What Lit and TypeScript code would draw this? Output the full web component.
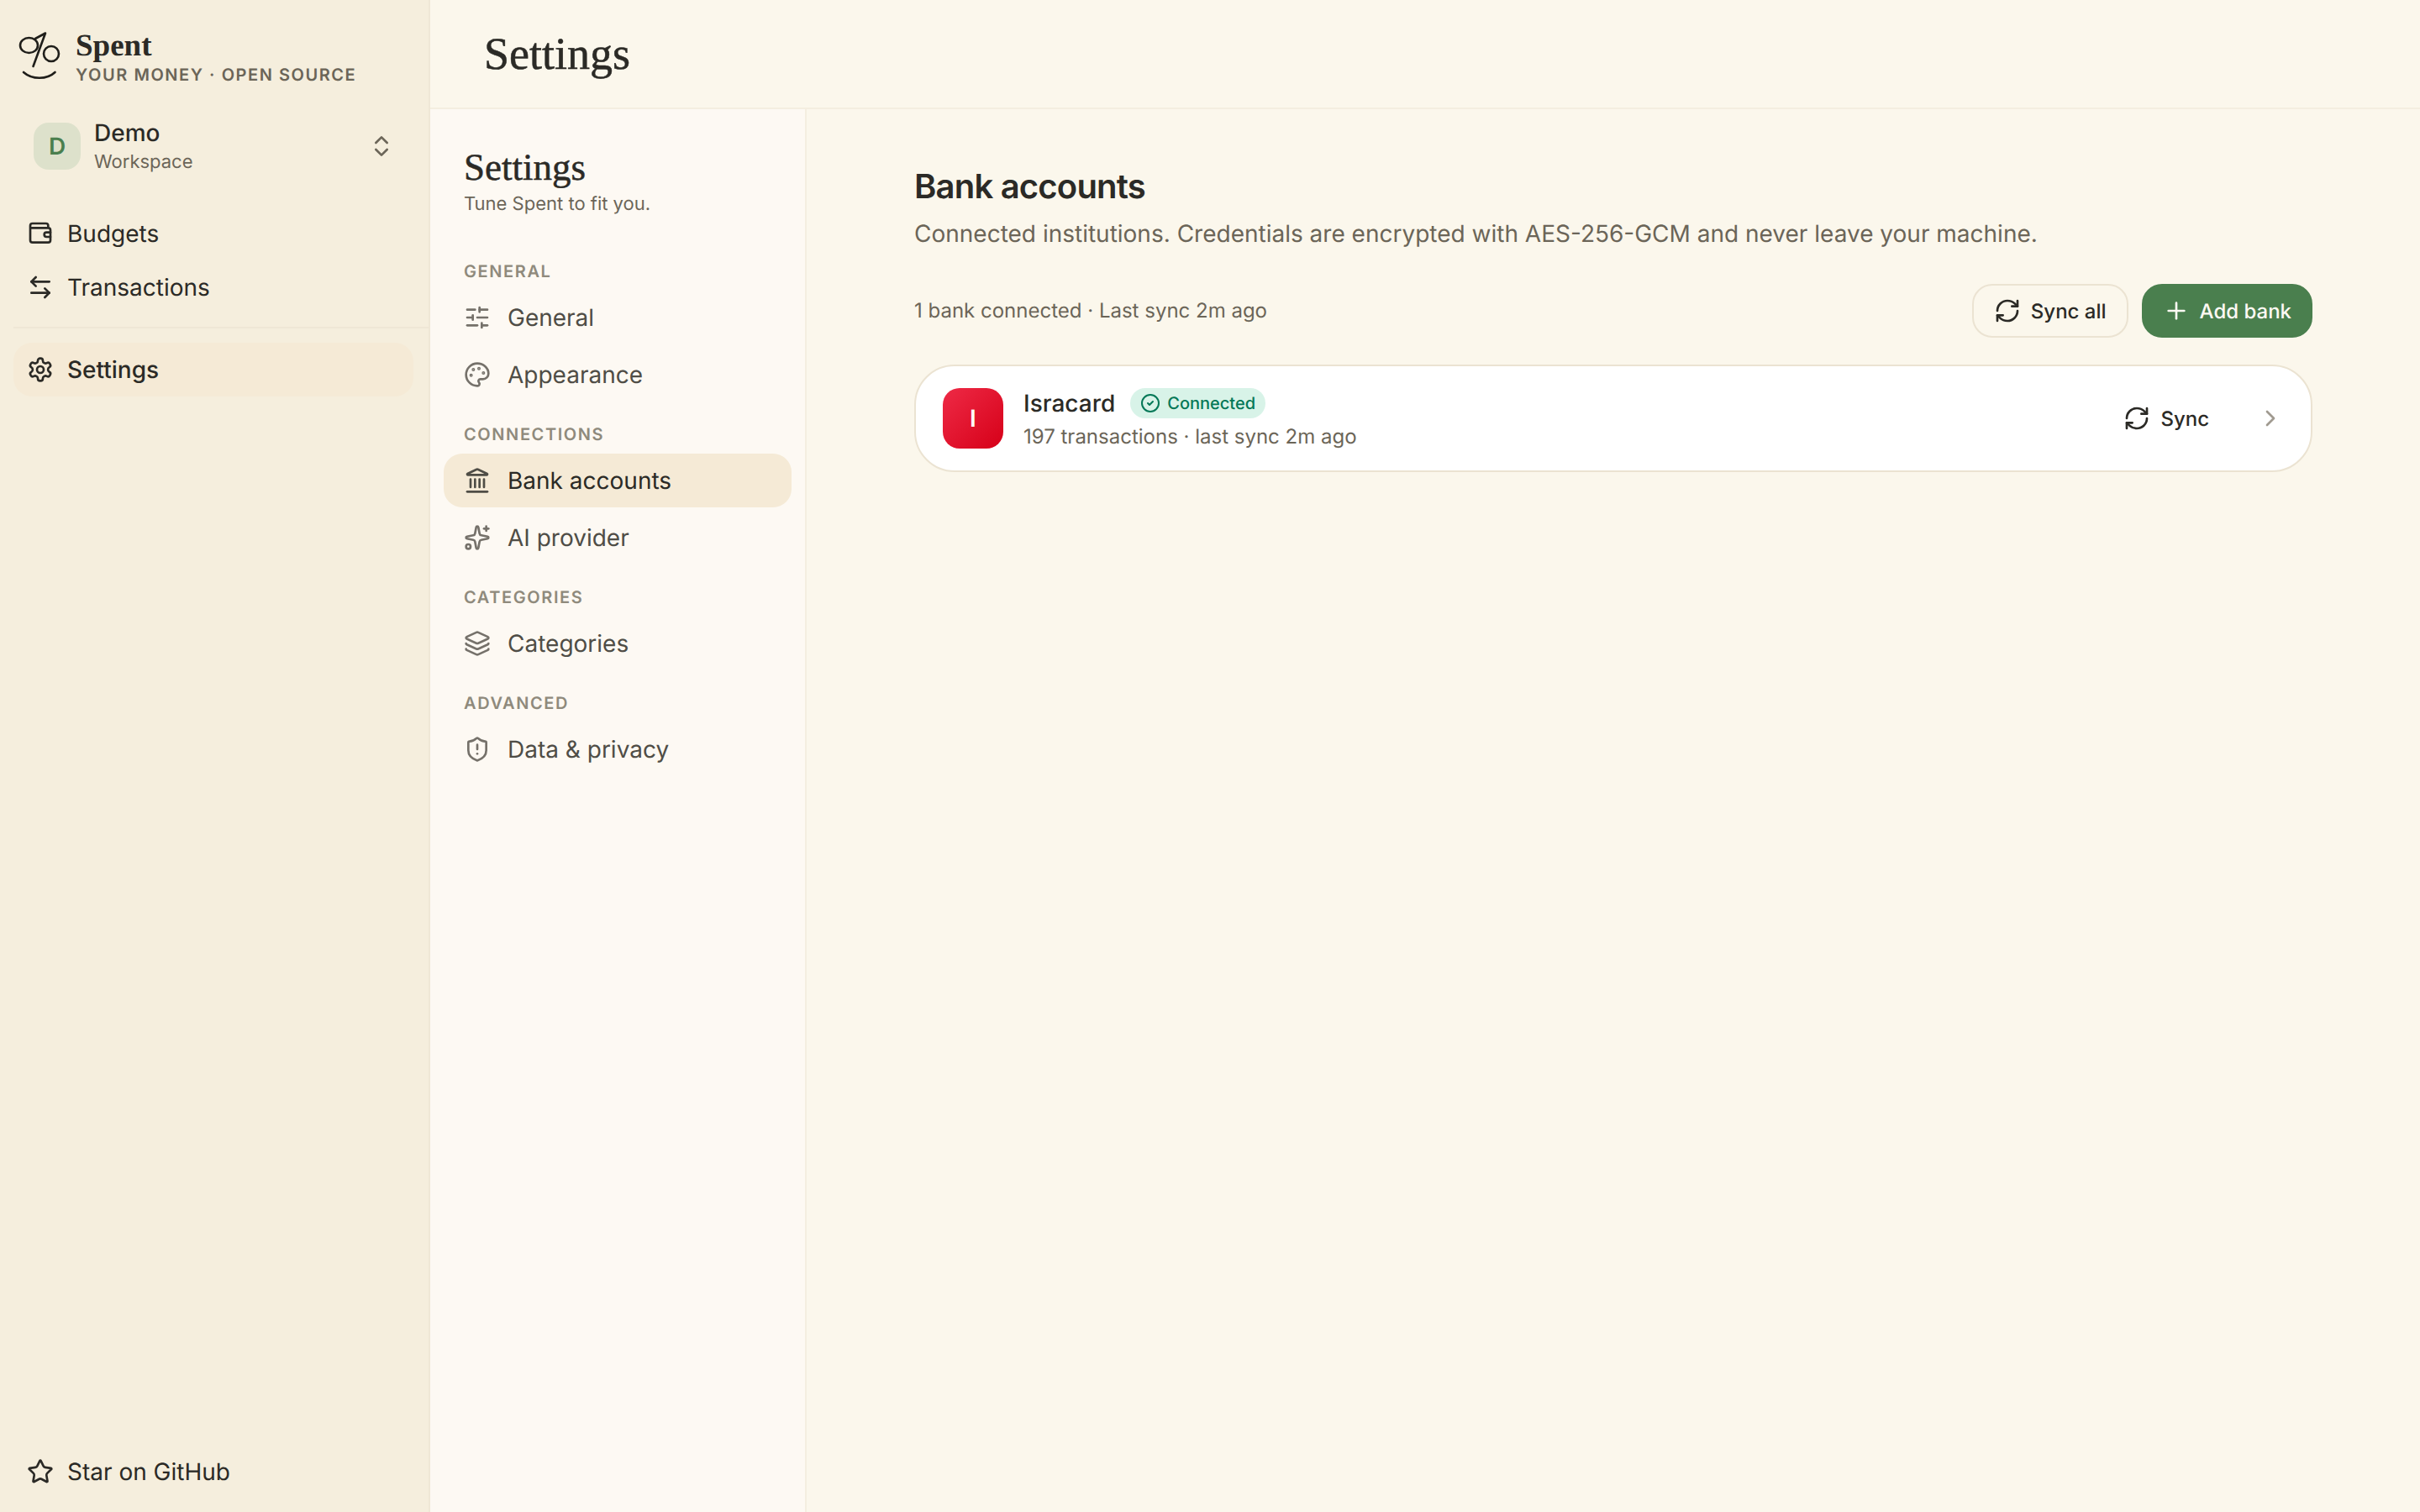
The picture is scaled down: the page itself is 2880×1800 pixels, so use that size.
import { LitElement, html, css, svg } from "lit";
import { customElement } from "lit/decorators.js";

const icons: Record<string, unknown> = {
  wallet: svg`<path d="M4 7h15a2 2 0 0 1 2 2v9a2 2 0 0 1-2 2H5a2 2 0 0 1-2-2V5a2 2 0 0 1 2-2h12a2 2 0 0 1 2 2v2"/><path d="M21 11h-3.5a2 2 0 0 0 0 4H21"/>`,
  arrows: svg`<path d="M8 3 4 7l4 4"/><path d="M4 7h16"/><path d="m16 21 4-4-4-4"/><path d="M20 17H4"/>`,
  gear: svg`<path d="M12.22 2h-.44a2 2 0 0 0-2 2v.18a2 2 0 0 1-1 1.73l-.43.25a2 2 0 0 1-2 0l-.15-.08a2 2 0 0 0-2.73.73l-.22.38a2 2 0 0 0 .73 2.73l.15.1a2 2 0 0 1 1 1.72v.51a2 2 0 0 1-1 1.74l-.15.09a2 2 0 0 0-.73 2.73l.22.38a2 2 0 0 0 2.73.73l.15-.08a2 2 0 0 1 2 0l.43.25a2 2 0 0 1 1 1.73V20a2 2 0 0 0 2 2h.44a2 2 0 0 0 2-2v-.18a2 2 0 0 1 1-1.73l.43-.25a2 2 0 0 1 2 0l.15.08a2 2 0 0 0 2.73-.73l.22-.39a2 2 0 0 0-.73-2.73l-.15-.08a2 2 0 0 1-1-1.74v-.5a2 2 0 0 1 1-1.74l.15-.09a2 2 0 0 0 .73-2.73l-.22-.38a2 2 0 0 0-2.73-.73l-.15.08a2 2 0 0 1-2 0l-.43-.25a2 2 0 0 1-1-1.73V4a2 2 0 0 0-2-2z"/><circle cx="12" cy="12" r="3"/>`,
  star: svg`<path d="M11.525 2.295a.53.53 0 0 1 .95 0l2.31 4.679a2.123 2.123 0 0 0 1.595 1.16l5.166.756a.53.53 0 0 1 .294.904l-3.736 3.638a2.123 2.123 0 0 0-.611 1.878l.882 5.14a.53.53 0 0 1-.771.56l-4.618-2.428a2.122 2.122 0 0 0-1.973 0L6.396 21.01a.53.53 0 0 1-.77-.56l.881-5.139a2.122 2.122 0 0 0-.611-1.879L2.16 9.795a.53.53 0 0 1 .294-.906l5.165-.755a2.122 2.122 0 0 0 1.597-1.16z"/>`,
  updown: svg`<path d="m7 15 5 5 5-5"/><path d="m7 9 5-5 5 5"/>`,
  sliders: svg`<path d="M10 5H3"/><path d="M12 19H3"/><path d="M14 3v4"/><path d="M16 17v4"/><path d="M21 12h-9"/><path d="M21 19h-5"/><path d="M21 5h-7"/><path d="M8 10v4"/><path d="M8 12H3"/>`,
  palette: svg`<path d="M12 22a1 1 0 0 1 0-20 10 9 0 0 1 10 9 5 5 0 0 1-5 5h-2.25a1.75 1.75 0 0 0-1.4 2.8l.3.4a1.75 1.75 0 0 1-1.4 2.8z"/><circle cx="13.5" cy="6.5" r=".5" fill="currentColor"/><circle cx="17.5" cy="10.5" r=".5" fill="currentColor"/><circle cx="6.5" cy="12.5" r=".5" fill="currentColor"/><circle cx="8.5" cy="7.5" r=".5" fill="currentColor"/>`,
  landmark: svg`<path d="M10 18v-7"/><path d="M11.12 2.198a2 2 0 0 1 1.76.006l7.866 3.847c.476.233.31.949-.22.949H3.474c-.53 0-.695-.716-.22-.949z"/><path d="M14 18v-7"/><path d="M18 18v-7"/><path d="M3 22h18"/><path d="M6 18v-7"/>`,
  sparkles: svg`<path d="M11.017 2.814a1 1 0 0 1 1.966 0l1.051 5.558a2 2 0 0 0 1.594 1.594l5.558 1.051a1 1 0 0 1 0 1.966l-5.558 1.051a2 2 0 0 0-1.594 1.594l-1.051 5.558a1 1 0 0 1-1.966 0l-1.051-5.558a2 2 0 0 0-1.594-1.594l-5.558-1.051a1 1 0 0 1 0-1.966l5.558-1.051a2 2 0 0 0 1.594-1.594z"/><path d="M20 2v4"/><path d="M22 4h-4"/><circle cx="4" cy="20" r="2"/>`,
  layers: svg`<path d="M12.83 2.18a2 2 0 0 0-1.66 0L2.6 6.08a1 1 0 0 0 0 1.83l8.58 3.91a2 2 0 0 0 1.66 0l8.58-3.9a1 1 0 0 0 0-1.83z"/><path d="M2 12a1 1 0 0 0 .58.91l8.6 3.91a2 2 0 0 0 1.65 0l8.58-3.9A1 1 0 0 0 22 12"/><path d="M2 17a1 1 0 0 0 .58.91l8.6 3.91a2 2 0 0 0 1.65 0l8.58-3.9A1 1 0 0 0 22 17"/>`,
  shield: svg`<path d="M20 13c0 5-3.5 7.5-7.66 8.95a1 1 0 0 1-.67-.01C7.5 20.5 4 18 4 13V6a1 1 0 0 1 1-1c2 0 4.5-1.2 6.24-2.72a1.17 1.17 0 0 1 1.52 0C14.51 3.81 17 5 19 5a1 1 0 0 1 1 1z"/><path d="M12 8v4"/><path d="M12 16h.01"/>`,
  refresh: svg`<path d="M3 12a9 9 0 0 1 9-9 9.75 9.75 0 0 1 6.74 2.74L21 8"/><path d="M21 3v5h-5"/><path d="M21 12a9 9 0 0 1-9 9 9.75 9.75 0 0 1-6.74-2.74L3 16"/><path d="M8 16H3v5"/>`,
  plus: svg`<path d="M5 12h14"/><path d="M12 5v14"/>`,
  chevron: svg`<path d="m9 18 6-6-6-6"/>`,
  check: svg`<circle cx="12" cy="12" r="10"/><path d="m9 12 2 2 4-4"/>`,
};

const icon = (name: string) => html`<svg class="icon" viewBox="0 0 24 24" fill="none" stroke="currentColor" stroke-width="2" stroke-linecap="round" stroke-linejoin="round">${icons[name]}</svg>`;

const groups = [
  { label: "GENERAL", items: [["sliders", "General"], ["palette", "Appearance"]] },
  { label: "CONNECTIONS", items: [["landmark", "Bank accounts"], ["sparkles", "AI provider"]] },
  { label: "CATEGORIES", items: [["layers", "Categories"]] },
  { label: "ADVANCED", items: [["shield", "Data & privacy"]] },
];

@customElement("app-root")
export class AppRoot extends LitElement {
  static styles = css`
    :host { display: flex; width: 2880px; height: 1800px; overflow: hidden; font-family: Inter, "Liberation Sans", sans-serif; font-optical-sizing: none; text-rendering: geometricPrecision; color: #2b2a26; background: #fbf7ec; }
    * { box-sizing: border-box; }
    .icon { width: 32px; height: 32px; flex: none; display: block; }

    .side { width: 512px; flex: none; display: flex; flex-direction: column; background: #f5eedd; border-right: 2px solid #efe7d6; }
    .brand { display: flex; gap: 18px; padding: 36px 0 0 22px; height: 96px; }
    .logo { width: 50px; height: 60px; flex: none; }
    .brand-text { display: flex; flex-direction: column; }
    .brand-name { font-family: "Liberation Serif", serif; font-weight: 700; font-size: 37px; line-height: 38px; color: #2b2a26; }
    .brand-tag { font-size: 20px; line-height: 24px; font-weight: 600; letter-spacing: 1.55px; color: #6b6558; margin-top: 3px; white-space: nowrap; }
    .ws { display: flex; align-items: center; gap: 16px; padding: 0 40px; margin-top: 50px; height: 56px; }
    .avatar { width: 56px; height: 56px; flex: none; border-radius: 18px; background: #dde1cb; color: #4a7f4e; font-size: 28px; font-weight: 600; display: flex; align-items: center; justify-content: center; }
    .ws-text { flex: 1; display: flex; flex-direction: column; padding-top: 2px; }
    .ws-name { font-size: 28px; line-height: 34px; font-weight: 500; color: #2b2a26; }
    .ws-sub { font-size: 22px; line-height: 32px; margin-top: 2px; color: #6b6558; }
    .updown { color: #6b6558; }
    .nav { display: flex; flex-direction: column; margin-top: 44px; }
    .nav-item { display: flex; align-items: center; gap: 16px; height: 64px; padding: 0 16px; margin: 0 16px; border-radius: 22px; font-size: 28px; color: #2b2a26; }
    .sep { height: 2px; background: #efe7d6; margin: 15px 0 17px 16px; }
    .nav-item.on { background: #f5ead6; font-weight: 500; margin-right: 18px; }
    .spacer { flex: 1; }
    .foot { margin-bottom: 16px; }

    .right { flex: 1; display: flex; flex-direction: column; min-width: 0; }
    .top { height: 130px; flex: none; display: flex; align-items: center; padding-left: 64px; border-bottom: 2px solid #f4eee0; }
    .top-title { font-family: "Liberation Serif", serif; font-size: 54px; font-weight: 400; -webkit-text-stroke: 0.5px #2b2a26; color: #2b2a26; }
    .body { flex: 1; display: flex; min-height: 0; }

    .panel { width: 448px; flex: none; background: #fdf9f3; border-right: 2px solid #f4eee0; padding: 44px 16px 0; display: flex; flex-direction: column; }
    .panel-title { font-family: "Liberation Serif", serif; font-size: 45px; line-height: 50px; padding-left: 24px; -webkit-text-stroke: 0.5px #2b2a26; color: #2b2a26; }
    .panel-sub { font-size: 22px; line-height: 32px; color: #6b6558; padding-left: 24px; margin-top: 3px; }
    .groups { display: flex; flex-direction: column; gap: 27px; margin-top: 52px; }
    .group { display: flex; flex-direction: column; gap: 4px; }
    .group-label { font-size: 20px; line-height: 24px; font-weight: 600; letter-spacing: 1.6px; color: #8f8a7c; padding-left: 24px; margin-bottom: 7px; }
    .item { display: flex; align-items: center; gap: 20px; height: 64px; padding: 0 24px; border-radius: 22px; font-size: 28px; color: #4f4d46; }
    .item .icon { color: #75716a; }
    .item.on { background: #f5ead6; color: #2b2a26; }
    .item.on .icon { color: #4f4d46; }

    .content { flex: 1; padding: 64px 128px 0; min-width: 0; }
    h1 { margin: 0; font-size: 40px; line-height: 56px; font-weight: 600; letter-spacing: -0.8px; color: #2b2a26; }
    .desc { margin-top: 6px; font-size: 28px; line-height: 44px; color: #6b6558; }
    .bar { display: flex; align-items: center; justify-content: space-between; margin-top: 38px; height: 64px; }
    .bar-text { font-size: 24px; color: #6b6558; padding-bottom: 2px; }
    .actions { display: flex; gap: 16px; }
    .btn { display: flex; align-items: center; gap: 12px; height: 64px; padding: 0 24px; border-radius: 24px; font-size: 24px; font-weight: 500; border: 2px solid #ebe3d2; color: #2b2a26; }
    .btn.primary { background: #4a7f4e; border-color: #4a7f4e; color: #fdf9f3; padding: 0 23px; }
    .card { display: flex; align-items: center; margin-top: 32px; height: 128px; background: #fff; border: 2px solid #ebe3d2; border-radius: 48px; padding: 0 32px; }
    .bank { width: 72px; height: 72px; flex: none; border-radius: 20px; background: linear-gradient(135deg, #ee2a46, #d60018); color: #fff; font-size: 28px; font-weight: 600; display: flex; align-items: center; justify-content: center; }
    .info { flex: 1; margin-left: 24px; padding-top: 3px; display: flex; flex-direction: column; gap: 5px; }
    .row { display: flex; align-items: center; gap: 18px; height: 36px; }
    .name { font-size: 28px; font-weight: 500; color: #2b2a26; }
    .badge { display: flex; align-items: center; gap: 8px; height: 36px; padding: 0 12px; border-radius: 18px; background: #d8f3e8; color: #047857; font-size: 20px; font-weight: 500; }
    .badge .icon { width: 24px; height: 24px; }
    .meta { font-size: 24px; line-height: 34px; color: #6b6558; }
    .sync { display: flex; align-items: center; gap: 12px; font-size: 24px; font-weight: 500; color: #2b2a26; margin-right: 57px; }
    .chev { color: #a09a90; }
  `;

  render() {
    return html`
      <aside class="side">
        <div class="brand">
          <svg class="logo" viewBox="22 36 50 60" fill="none" stroke="#1f1e1a" stroke-width="2.6" stroke-linecap="round" stroke-linejoin="round">
            <ellipse cx="34.500" cy="54" rx="10.500" ry="9"/><circle cx="61" cy="64" r="9"/>
            <path d="M39.500 79 54 39.500 42 46"/><path d="M28 86c10 9 28 9 37.500 0"/>
          </svg>
          <div class="brand-text">
            <div class="brand-name">Spent</div>
            <div class="brand-tag">YOUR MONEY · OPEN SOURCE</div>
          </div>
        </div>
        <div class="ws">
          <div class="avatar">D</div>
          <div class="ws-text"><div class="ws-name">Demo</div><div class="ws-sub">Workspace</div></div>
          <span class="updown">${icon("updown")}</span>
        </div>
        <nav class="nav">
          <div class="nav-item">${icon("wallet")}Budgets</div>
          <div class="nav-item">${icon("arrows")}Transactions</div>
          <div class="sep"></div>
          <div class="nav-item on">${icon("gear")}Settings</div>
        </nav>
        <div class="spacer"></div>
        <div class="nav-item foot">${icon("star")}Star on GitHub</div>
      </aside>
      <div class="right">
        <header class="top"><div class="top-title">Settings</div></header>
        <div class="body">
          <section class="panel">
            <div class="panel-title">Settings</div>
            <div class="panel-sub">Tune Spent to fit you.</div>
            <div class="groups">
              ${groups.map((g) => html`
                <div class="group">
                  <div class="group-label">${g.label}</div>
                  ${g.items.map(([i, t]) => html`<div class="item ${t === "Bank accounts" ? "on" : ""}">${icon(i)}${t}</div>`)}
                </div>`)}
            </div>
          </section>
          <main class="content">
            <h1>Bank accounts</h1>
            <div class="desc">Connected institutions. Credentials are encrypted with AES-256-GCM and never leave your machine.</div>
            <div class="bar">
              <div class="bar-text">1 bank connected · Last sync 2m ago</div>
              <div class="actions">
                <div class="btn">${icon("refresh")}Sync all</div>
                <div class="btn primary">${icon("plus")}Add bank</div>
              </div>
            </div>
            <div class="card">
              <div class="bank">I</div>
              <div class="info">
                <div class="row"><span class="name">Isracard</span><span class="badge">${icon("check")}Connected</span></div>
                <div class="meta">197 transactions · last sync 2m ago</div>
              </div>
              <div class="sync">${icon("refresh")}Sync</div>
              <span class="chev">${icon("chevron")}</span>
            </div>
          </main>
        </div>
      </div>
    `;
  }
}
